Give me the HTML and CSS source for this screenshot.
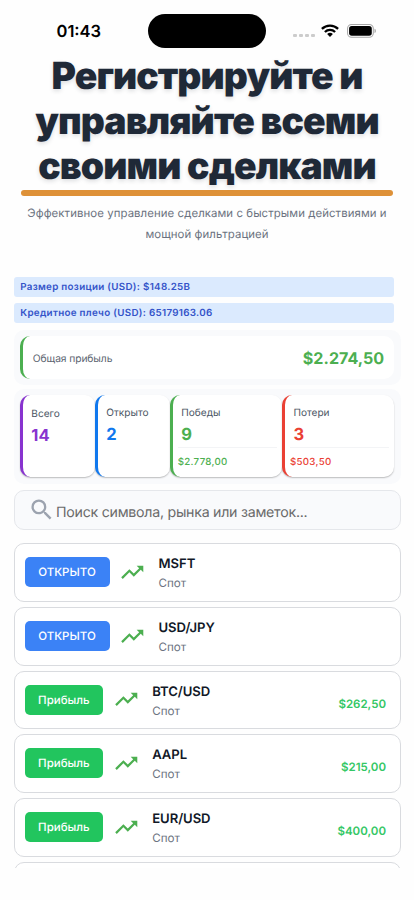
FILE: index.html
```html
<!DOCTYPE html>
<html lang="ru">
<head>
<meta charset="utf-8">
<title>Сделки</title>
<link rel="stylesheet" href="styles.css">
</head>
<body>
<svg width="0" height="0" class="defs" aria-hidden="true">
  <symbol id="trend" viewBox="0 0 24 24"><path d="M16 6l2.29 2.29-4.88 4.88-4-4L2 16.59 3.41 18l6-6 4 4 6.3-6.29L22 12V6z"/></symbol>
</svg>
<div class="phone">
  <div class="status">
    <span class="time">01:43</span>
    <span class="island"></span>
    <span class="signals">
      <span class="dots"><i></i><i></i><i></i><i></i></span>
      <svg class="wifi" viewBox="0 0 18 13"><g fill="none" stroke="#000" stroke-width="2.3"><path d="M.9 4.9a11.6 11.6 0 0 1 16.2 0"/><path d="M3.9 8a7.3 7.3 0 0 1 10.2 0"/></g><path d="M9 13L6.1 10.1a4.1 4.1 0 0 1 5.8 0z"/></svg>
      <svg class="battery" viewBox="0 0 29 14"><rect x=".5" y=".5" width="25.4" height="12.6" rx="4" fill="none" stroke="#a6a6a6"/><rect x="2" y="2" width="22.4" height="9.6" rx="2.6"/><path d="M27.1 4.7c1.8.6 1.8 3.6 0 4.2z" fill="#a6a6a6"/></svg>
    </span>
  </div>

  <header class="hero">
    <h1><span>Регистрируйте и</span><span>управляйте всеми</span><span>своими сделками</span></h1>
    <div class="rule"></div>
    <p>Эффективное управление сделками с быстрыми действиями и<br>мощной фильтрацией</p>
  </header>

  <div class="badges">
    <div class="badge">Размер позиции (USD): $148.25B</div>
    <div class="badge">Кредитное плечо (USD): 65179163.06</div>
  </div>

  <section class="panel">
    <div class="total"><span class="total-label">Общая прибыль</span><strong>$2.274,50</strong></div>
  </section>

  <section class="panel stats">
    <div class="stat purple"><span class="label">Всего</span><b>14</b></div>
    <div class="stat blue"><span class="label">Открыто</span><b>2</b></div>
    <div class="stat green wide"><span class="label">Победы</span><b>9</b><small>$2.778,00</small></div>
    <div class="stat red wide"><span class="label">Потери</span><b>3</b><small>$503,50</small></div>
  </section>

  <div class="search">
    <svg viewBox="0 0 24 24"><path d="M15.5 14h-.79l-.28-.27A6.47 6.47 0 0 0 16 9.5 6.5 6.5 0 1 0 9.5 16c1.61 0 3.09-.59 4.23-1.57l.27.28v.79l5 4.99L20.49 19zm-6 0a4.5 4.5 0 1 1 0-9 4.5 4.5 0 0 1 0 9z"/></svg>
    <span>Поиск символа, рынка или заметок...</span>
  </div>

  <main class="list">
    <article class="trade"><span class="tag open">ОТКРЫТО</span><svg class="trend"><use href="#trend"/></svg><div class="info"><h2>MSFT</h2><p>Спот</p></div></article>
    <article class="trade"><span class="tag open">ОТКРЫТО</span><svg class="trend"><use href="#trend"/></svg><div class="info"><h2>USD/JPY</h2><p>Спот</p></div></article>
    <article class="trade"><span class="tag profit">Прибыль</span><svg class="trend"><use href="#trend"/></svg><div class="info"><h2>BTC/USD</h2><p>Спот</p></div><span class="amount">$262,50</span></article>
    <article class="trade"><span class="tag profit">Прибыль</span><svg class="trend"><use href="#trend"/></svg><div class="info"><h2>AAPL</h2><p>Спот</p></div><span class="amount">$215,00</span></article>
    <article class="trade"><span class="tag profit">Прибыль</span><svg class="trend"><use href="#trend"/></svg><div class="info"><h2>EUR/USD</h2><p>Спот</p></div><span class="amount">$400,00</span></article>
    <article class="trade"></article>
  </main>
</div>
</body>
</html>
```
FILE: styles.css
```css
* { box-sizing: border-box; margin: 0; padding: 0; }
body { background: #fefefe; font-family: Inter, "Liberation Sans", sans-serif; color: #1f2937; text-rendering: geometricPrecision; }
.defs { display: block; height: 0; }
.phone { width: 414px; height: 900px; overflow: hidden; }

.status { height: 52.7px; padding: 13.5px 38px 0 56.5px; display: flex; align-items: flex-start; }
.time { width: 91.5px; padding-top: 7.8px; font-size: 16.5px; line-height: 21px; font-weight: 600; color: #000; }
.island { width: 118px; height: 34.5px; border-radius: 18px; background: #000; }
.signals { flex: 1; display: flex; justify-content: flex-end; padding-top: 10px; }
.dots { display: flex; gap: 2px; margin: 10.3px 6.5px 0 0; }
.dots i { width: 3.8px; height: 3.3px; border-radius: 1px; background: #ccc; }
.wifi { width: 18px; height: 13px; margin-right: 7.5px; }
.battery { width: 29.5px; height: 14.2px; }

.hero { text-align: center; height: 224.3px; }
h1 { height: 137.5px; font-size: 37.3px; line-height: 45.2px; font-weight: 900; letter-spacing: -.9px; white-space: nowrap; text-shadow: 0 2px 4px rgba(31, 41, 55, .15); }
h1 span { display: block; }
.rule { height: 5.7px; margin: 0 21.3px; border-radius: 3px; background: #de9138; }
.hero p { margin-top: 7.3px; font-size: 11.4px; line-height: 20.7px; font-weight: 400; letter-spacing: .08px; color: #6b7280; white-space: nowrap; }

.badges { display: flex; flex-direction: column; gap: 6.2px; padding: 0 20px 0 13.5px; }
.badge { height: 20px; padding: 1px 6.7px 0; border-radius: 3px; background: #dbeafe; color: #3454c9; font-size: 9.8px; line-height: 20px; font-weight: 600; letter-spacing: .3px; }

.panel { margin: 6.8px 13.5px 0; padding: 6px 6.3px; border-radius: 10px; background: #f9fafc; }
.total { height: 43.3px; display: flex; align-items: center; justify-content: space-between; padding: 1px 10px 0; border-left: 3px solid #4caf50; border-radius: 10px; background: #fff; }
.total-label { padding-top: 1px; font-size: 10.3px; letter-spacing: -.1px; color: #5c6470; }
.total strong { font-size: 16.1px; font-weight: 700; color: #4caf50; }

.stats { margin-top: 4px; display: flex; height: 94.5px; }
.stat { width: 75px; height: 82px; padding: 11px 5px 0 8.5px; display: flex; flex-direction: column; border-left: 3px solid; border-radius: 10px; background: #fff; box-shadow: 0 1px 1.5px rgba(0, 0, 0, .25); }
.wide { width: 112.3px; }
.label { padding-top: .6px; font-size: 10.1px; line-height: 13px; color: #4b5563; }
.stat b { margin-top: 4.4px; font-size: 16.5px; line-height: 20px; font-weight: 700; }
.stat small { margin: 3px 0 0 -3.5px; padding-top: 7.5px; border-top: 1px solid #f3f4f6; font-size: 9.7px; line-height: 13px; font-weight: 500; letter-spacing: .3px; }
.purple { border-color: #8833cf; color: #8833cf; padding-top: 12px; }
.blue { border-color: #1078ee; color: #1078ee; }
.green { border-color: #4caf50; color: #4caf50; }
.red { border-color: #ea4034; color: #ea4034; }

.search { margin: 6.5px 13.5px 0; height: 39.5px; display: flex; align-items: center; border: 1px solid #e5e7eb; border-radius: 10px; background: #f9fafc; padding-left: 13px; }
.search svg { width: 27.5px; height: 27.5px; fill: #9ca3af; }
.search span { margin: 4px 0 0 1px; font-size: 14.2px; letter-spacing: -.26px; color: #6b6b6b; white-space: nowrap; }

.list { margin: 13.3px 13.5px 0; height: 324.5px; overflow: hidden; display: flex; flex-direction: column; gap: 5px; }
.trade { flex: none; height: 58.75px; display: flex; border: 1px solid #d9dbdf; border-radius: 10px; background: #fff; padding: 13px 13.5px 0 10px; }
.tag { height: 30px; border-radius: 5px; color: #fff; font-size: 11.5px; line-height: 30px; text-align: center; font-weight: 500; }
.open { width: 85px; background: #3b82f6; }
.profit { width: 78.7px; background: #22c55e; }
.trend { width: 26.5px; height: 26.5px; margin: 1.7px 0 0 9.5px; fill: #4caf50; }
.info { margin: -1px 0 0 13px; }
.info h2 { font-size: 13.1px; line-height: 17px; font-weight: 600; letter-spacing: -.05px; color: #111827; }
.info p { margin-top: 2px; font-size: 11.6px; line-height: 16px; color: #6b7280; }
.amount { margin: 11px 0 0 auto; font-size: 11.5px; line-height: 16px; font-weight: 600; color: #34c765; }
```
